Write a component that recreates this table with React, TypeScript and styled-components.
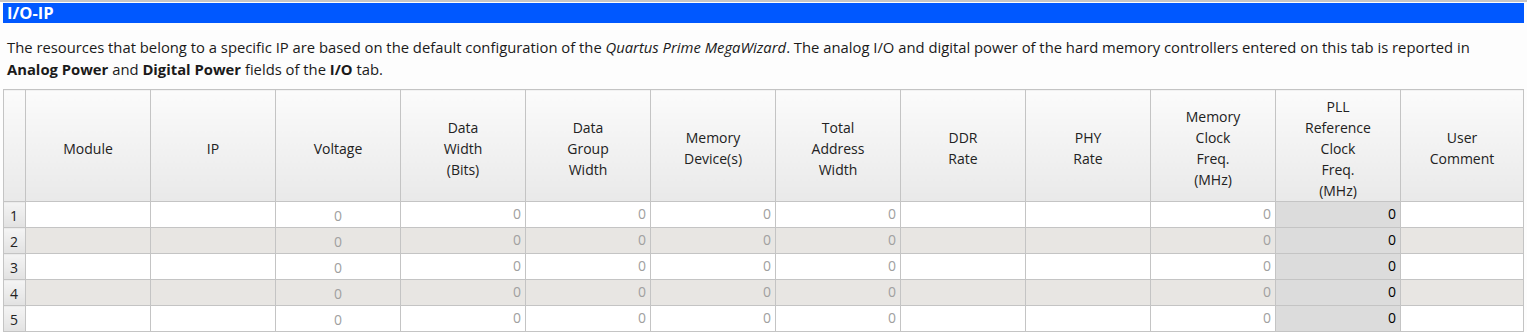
import React from "react";
import styled, { createGlobalStyle } from "styled-components";

const GlobalStyle = createGlobalStyle`
  html, body {
    margin: 0;
    padding: 0;
    background: #fdfdfd;
  }
  body {
    font-family: "Open Sans", "Liberation Sans", sans-serif;
    color: #1d1d1d;
  }
`;

const columns = [
  { key: "module", label: ["Module"], kind: "text", width: 125 },
  { key: "ip", label: ["IP"], kind: "text", width: 125 },
  { key: "voltage", label: ["Voltage"], kind: "center", width: 125 },
  { key: "width", label: ["Data", "Width", "(Bits)"], kind: "num", width: 125 },
  { key: "group", label: ["Data", "Group", "Width"], kind: "num", width: 125 },
  { key: "device", label: ["Memory", "Device(s)"], kind: "num", width: 125 },
  { key: "addr", label: ["Total", "Address", "Width"], kind: "num", width: 125 },
  { key: "ddr", label: ["DDR", "Rate"], kind: "text", width: 125 },
  { key: "phy", label: ["PHY", "Rate"], kind: "text", width: 125 },
  { key: "memclk", label: ["Memory", "Clock", "Freq.", "(MHz)"], kind: "num", width: 125 },
  { key: "pll", label: ["PLL", "Reference", "Clock", "Freq.", "(MHz)"], kind: "calc", width: 125 },
  { key: "comment", label: ["User", "Comment"], kind: "text", width: 123 },
];

const rows = [1, 2, 3, 4, 5];

export default function App() {
  return (
    <Page>
      <GlobalStyle />
      <TitleBar>I/O-IP</TitleBar>
      <Intro>
        The resources that belong to a specific IP are based on the default
        configuration of the <em>Quartus Prime MegaWizard</em>. The analog I/O
        and digital power of the hard memory controllers entered on this tab is
        reported in
        <br />
        <b>Analog Power</b> and <b>Digital Power</b> fields of the <b>I/O</b>{" "}
        tab.
      </Intro>
      <Sheet>
        <colgroup>
          <col style={{ width: 22 }} />
          {columns.map((c) => (
            <col key={c.key} style={{ width: c.width }} />
          ))}
        </colgroup>
        <thead>
          <HeadRow>
            <Corner />
            {columns.map((c) => (
              <HeadCell key={c.key}>
                {c.label.map((line, i) => (
                  <div key={i}>{line}</div>
                ))}
              </HeadCell>
            ))}
          </HeadRow>
        </thead>
        <tbody>
          {rows.map((n) => (
            <BodyRow key={n}>
              <RowNum>{n}</RowNum>
              {columns.map((c) => (
                <Cell key={c.key} $shade={n % 2 === 0} $kind={c.kind}>
                  {c.kind === "text" ? "" : "0"}
                </Cell>
              ))}
            </BodyRow>
          ))}
        </tbody>
      </Sheet>
    </Page>
  );
}

const Page = styled.div`
  border-top: 2px solid #c6c6c6;
  padding: 1px 3px 0;
`;

const TitleBar = styled.div`
  background: #0058ff;
  color: #fff;
  font-weight: 700;
  font-size: 16.5px;
  line-height: 20px;
  height: 20px;
  padding-left: 4px;
`;

const Intro = styled.p`
  margin: 13px 0 0;
  padding-left: 4px;
  font-size: 14.8px;
  line-height: 22px;
  color: #1a1a1a;
  white-space: nowrap;

  b {
    font-weight: 700;
  }
`;

const Sheet = styled.table`
  margin-top: 9px;
  width: 1520px;
  table-layout: fixed;
  border-collapse: collapse;
  font-size: 14px;
`;

const HeadRow = styled.tr`
  height: 112px;
`;

const BodyRow = styled.tr`
  height: 26px;
`;

const HeadCell = styled.th`
  padding: 5px 2px 0;
  border: 1px solid #c4c4c4;
  background: linear-gradient(#fbfbfb, #e9e9e9);
  font-weight: 400;
  line-height: 21px;
  color: #222;
  text-align: center;
  vertical-align: middle;
`;

const Corner = styled(HeadCell)`
  border-right: none;
`;

const RowNum = styled.td`
  padding: 3px 0 0 6px;
  border: 1px solid #c4c4c4;
  background: linear-gradient(#f4f4f4, #e2e2e2);
  color: #222;
  font-size: 14px;
  line-height: 18px;
  vertical-align: middle;
`;

const Cell = styled.td<{ $shade: boolean; $kind: string }>`
  padding: ${(p) => (p.$kind === "center" ? "3px 4px 0" : "0 4px 2px")};
  border: 1px solid #c4c4c4;
  background: ${(p) =>
    p.$kind === "calc" ? "#dcdcdc" : p.$shade ? "#e8e6e3" : "#ffffff"};
  color: ${(p) => (p.$kind === "calc" ? "#000" : "#a0a0a0")};
  text-align: ${(p) =>
    p.$kind === "center" ? "center" : p.$kind === "text" ? "left" : "right"};
  line-height: 18px;
  vertical-align: middle;
`;
